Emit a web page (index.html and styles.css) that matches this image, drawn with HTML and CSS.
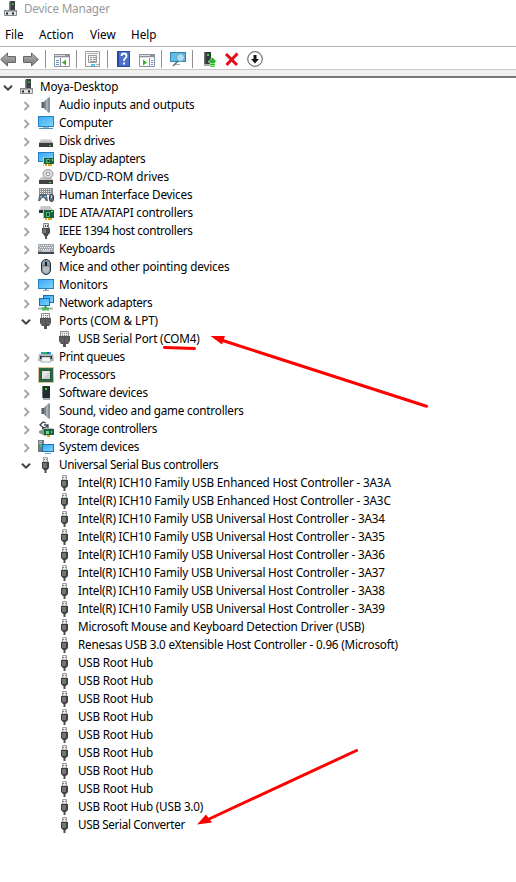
FILE: index.html
```html
<!DOCTYPE html>
<html lang="en">
<head>
<meta charset="utf-8">
<title>Device Manager</title>
<link rel="stylesheet" href="styles.css">
</head>
<body>
<svg class="defs" width="0" height="0">
  <defs>
    <linearGradient id="blue" x1="0" y1="0" x2="1" y2="1"><stop offset="0" stop-color="#3fa9f5"/><stop offset="1" stop-color="#7dd3ff"/></linearGradient>
    <linearGradient id="gray" x1="0" y1="0" x2="0" y2="1"><stop offset="0" stop-color="#b5b5b5"/><stop offset="1" stop-color="#777"/></linearGradient>
    <linearGradient id="silver" x1="0" y1="0" x2="0" y2="1"><stop offset="0" stop-color="#e4e4e4"/><stop offset="1" stop-color="#aaa"/></linearGradient>
  </defs>
  <symbol id="right" viewBox="0 0 8 10"><path d="M1.500 1l4 4-4 4" fill="none" stroke="#a6a6a6" stroke-width="1.900"/></symbol>
  <symbol id="down" viewBox="0 0 10 8"><path d="M1 1.700l4 4 4-4" fill="none" stroke="#404040" stroke-width="2"/></symbol>
  <symbol id="pc" viewBox="0 0 16 16"><path d="M6 1l1.500-1H12v9H6z" fill="#3b3f42"/><path d="M6 1h1.500v8H6z" fill="#7b8083"/><path d="M9 2.500h1.500V4H9z" fill="#35e02f"/><path d="M1.500 9.500h12v5h-12z" fill="#dfe1e2" stroke="#85898c"/><path d="M1 9h13v1.500H1z" fill="#85898c"/><path d="M3 11.500h2v2H3zM9 11.500h2v2H9z" fill="#222"/></symbol>
  <symbol id="audio" viewBox="0 0 16 16"><path d="M3 5h3v6H3z" fill="#59626a"/><path d="M3 5h1v6H3z" fill="#a3abb2"/><path d="M6 5l4-4.500v15L6 11z" fill="#a4afb8"/><path d="M6 5l2-2.200v10.400L6 11z" fill="#7b8791"/><path d="M10 .5h2v15h-2z" fill="#84909a"/></symbol>
  <symbol id="computer" viewBox="0 0 16 16"><path d="M0 1h16v11H0z" fill="#2380c4"/><path d="M1 2h14v9H1z" fill="url(#blue)"/><path d="M5 12h6v1H5z" fill="#90b8d0"/><path d="M1 13.500h14" stroke="#4a90b8"/></symbol>
  <symbol id="disk" viewBox="0 0 16 16"><path d="M3 6h10l2 4H1z" fill="url(#silver)"/><path d="M1 10h14v4H1z" fill="#3c3c3c"/><path d="M11 12h2v1h-2z" fill="#35e02f"/></symbol>
  <symbol id="display" viewBox="0 0 16 16"><path d="M0 1h16v10H0z" fill="#2380c4"/><path d="M1 2h14v8H1z" fill="url(#blue)"/><path d="M6 7h10v6H6z" fill="#17643c"/><path d="M5 6h1v9H5z" fill="#c8cdd0"/><path d="M8 8h4v4H8z" fill="#58ab73"/><path d="M9.500 9h2v2h-2z" fill="#073f22"/><path d="M7 13h2v2H7zM10 13h4v2h-4z" fill="#e5a01e"/><path d="M14 8h1v2h-1z" fill="#9fe2ac"/></symbol>
  <symbol id="dvd" viewBox="0 0 16 16"><path d="M3 8h10l2 3H1z" fill="#c5c5c5"/><ellipse cx="10" cy="5" rx="5" ry="4.500" fill="#d9dadb" stroke="#969899"/><circle cx="10" cy="5" r="1.700" fill="#fff" stroke="#969899"/><path d="M1 11h14v4H1z" fill="#414141"/><path d="M11 13h2v1h-2z" fill="#35e02f"/></symbol>
  <symbol id="hid" viewBox="0 0 16 16"><path d="M1 1h14v7H1z" fill="#8b9196"/><path d="M2 2.500h12M2 4.500h12M2 6.500h12" stroke="#e8ebed" stroke-dasharray="1 1"/><path d="M0 14l1.500-7h7l1.500 7H8l-2-3H4l-2 3z" fill="#59656e"/><path d="M2 9h2v1.500H2zM6 9h2v1.500H6z" fill="#6fc5f2"/><rect x="11.500" y="7.500" width="4" height="7" rx="2" fill="#5f7182" stroke="#26394a"/><path d="M13.500 8v3" stroke="#c6d4df"/></symbol>
  <symbol id="ide" viewBox="0 0 16 16"><path d="M3 1h9l3 4H1z" fill="#c8c8c8"/><path d="M1 5h6v3H1z" fill="#333"/><path d="M6 5h10v8H6z" fill="#17643c"/><path d="M5 4h1v10H5z" fill="#b9bec0"/><path d="M8 7h4v5H8z" fill="#5bb478"/><path d="M9 8h2v3H9z" fill="#0b4d28"/><path d="M7 13h2v2H7zM10 13h4v2h-4z" fill="#e5a01e"/><path d="M13 6h2v1h-2z" fill="#ade9bb"/></symbol>
  <symbol id="ieee" viewBox="0 0 16 16"><path d="M5.500.5h5v5h-5z" fill="#e0e0e0" stroke="#858585"/><path d="M7 2h1v2H7zM9 2h1v2H9z" fill="#555"/><path d="M4 5h8v5l-2 2v1H6v-1l-2-2z" fill="#4c4c4c"/><path d="M5 6h3v4H5z" fill="#777"/><path d="M7 13h2v3H7z" fill="#555"/></symbol>
  <symbol id="keyboard" viewBox="0 0 16 16"><path d="M0 3h16v10H0z" fill="#a0a7ac"/><path d="M0 11h16v2H0z" fill="#3e464c"/><path d="M1 4.500h14M2 6.500h13M1 8.500h14" stroke="#f1f3f4" stroke-dasharray="1 1"/><path d="M4 10h8" stroke="#e5e8ea"/></symbol>
  <symbol id="mouse" viewBox="0 0 16 16"><rect x="3.500" y=".5" width="9" height="15" rx="4.500" fill="#8f9ba6" stroke="#24303a"/><path d="M5 7h6v5q-3 4-6 0z" fill="#b5bec5"/><path d="M4 7h8M8 1v6" stroke="#5a6873" stroke-width=".7"/><path d="M7 3h2v4H7z" fill="#17212a"/></symbol>
  <symbol id="monitor" viewBox="0 0 16 16"><path d="M0 2h16v10H0z" fill="#2380c4"/><path d="M1 3h14v8H1z" fill="url(#blue)"/><path d="M5 13h6v1H5z" fill="#9ba9b1"/><path d="M7 12h2v1H7z" fill="#7896a8"/></symbol>
  <symbol id="network" viewBox="0 0 16 16"><path d="M5 0h11v8H5z" fill="#1770b5"/><path d="M6 1h9v6H6z" fill="url(#blue)"/><path d="M1 3h11v8H1z" fill="#1770b5"/><path d="M2 4h9v6H2z" fill="url(#blue)"/><path d="M0 13.500h15" stroke="#aab1b5" stroke-width="2"/><path d="M4 12.500h7v3H4z" fill="#4fb85a"/><path d="M6.500 11h2v2h-2z" fill="#319c3c"/></symbol>
  <symbol id="port" viewBox="0 0 16 16"><path d="M3.500.5h8v5h-8z" fill="#eee" stroke="#888"/><path d="M5 2.500h6M5 4.500h6" stroke="#777" stroke-dasharray="1 1"/><path d="M2 5h11v5l-2 3H4l-2-3z" fill="#505050"/><path d="M4 6v6M6 6v6M9 6v6M11 6v6" stroke="#777" stroke-width=".8"/><path d="M6 13h3v3H6z" fill="#555"/></symbol>
  <symbol id="printer" viewBox="0 0 16 16"><path d="M3 3h10v3H3z" fill="#1aa7dc"/><path d="M6 3h3v3H6z" fill="#28b85e"/><path d="M9 3h2v3H9z" fill="#155db5"/><path d="M1 5h14l1 7H0l1-7z" fill="#aeb4b8"/><path d="M2 7h12v3H2z" fill="#30373c"/><path d="M4 8h8l1 5H3z" fill="#f5f6f7" stroke="#89949b" stroke-width=".7"/></symbol>
  <symbol id="cpu" viewBox="0 0 16 16"><path d="M.5.5h15v15H.5z" fill="none" stroke="#b68b2c" stroke-dasharray="1 1"/><path d="M1 1h14v14H1z" fill="#2d6846"/><path d="M3 3h10v10H3z" fill="#245a3c"/><path d="M4 4h8v8H4z" fill="#e6e6e6"/><path d="M4 12l8-8v8z" fill="#cfd1d0"/></symbol>
  <symbol id="software" viewBox="0 0 16 16"><path d="M4 1h8v12H4z" fill="#252b2f"/><path d="M4 1h1v12H4z" fill="#6e7579"/><path d="M7 3h2v2H7z" fill="#35e02f"/><path d="M5 13h7v2H5z" fill="#a6abae"/></symbol>
  <symbol id="storage" viewBox="0 0 16 16"><path d="M8 2L5 1 2 4l4 3 4-2M6 4h4v3L7 9 4 7" fill="none" stroke="#3f4548" stroke-width="1.300"/><path d="M1 10l5-2h9v6H5l-4-2z" fill="#8b9690"/><path d="M6 8h10v6H6z" fill="#17643c"/><path d="M6 7h9v1H6z" fill="#b8bfc2"/><path d="M8 10h3v3H8zM13 10h1v2h-1z" fill="#7cd08f"/><path d="M6 14h2v1H6zM9 14h3v2H9z" fill="#e5a01e"/></symbol>
  <symbol id="system" viewBox="0 0 16 16"><path d="M0 1h6v12H0z" fill="#717a80"/><path d="M1 2h3v1H1zM1 4h3v1H1z" fill="#c6cdd1"/><path d="M2 6h2v2H2z" fill="#35d835"/><path d="M4 5h12v8H4z" fill="#1770b5"/><path d="M5 6h10v6H5z" fill="url(#blue)"/><path d="M7 14h6v1H7z" fill="#5faad0"/></symbol>
  <symbol id="usb" viewBox="0 0 16 16"><path d="M5.500.5h4v4.500h-4z" fill="#eee" stroke="#a0a0a0"/><path d="M6 2h1v1H6zM8 2h1v1H8z" fill="#777"/><path d="M4 5h7v6l-2 2H6l-2-2z" fill="#3f3f3f"/><path d="M5 6h4v5H5z" fill="#747474"/><path d="M6.500 12h2v4h-2z" fill="#4a4a4a"/></symbol>
  <symbol id="back" viewBox="0 0 16 16"><path d="M.7 8.500L7.500 2v3.500h8v6h-8V15z" fill="url(#gray)" stroke="#666"/></symbol>
  <symbol id="forward" viewBox="0 0 16 16"><path d="M15.300 8.500L8.500 2v3.500h-8v6h8V15z" fill="url(#gray)" stroke="#666"/></symbol>
  <symbol id="panel-left" viewBox="0 0 16 16"><path d="M.5 3.500h15v12H.5z" fill="#fff" stroke="#8a929b"/><path d="M0 3h16v4H0z" fill="#8a929b"/><path d="M1 4.500h10M1 6.500h14" stroke="#d9dee3"/><path d="M6.500 7v8" stroke="#8a929b"/><path d="M2 9.500h3M2 11.500h3M2 13.500h3" stroke="#5b8fca"/><path d="M12 8.500v6l-4-3z" fill="#3cae22"/></symbol>
  <symbol id="panel-right" viewBox="0 0 16 16"><path d="M.5 3.500h15v12H.5z" fill="#fff" stroke="#8a929b"/><path d="M0 3h16v4H0z" fill="#8a929b"/><path d="M1 4.500h10M1 6.500h14" stroke="#d9dee3"/><path d="M10.500 7v8" stroke="#8a929b"/><path d="M12 9.500h2M12 11.500h2M12 13.500h2" stroke="#5b8fca"/><path d="M4 8.500v6l4-3z" fill="#3cae22"/></symbol>
  <symbol id="properties" viewBox="0 0 16 16"><path d="M.5.500h14v15H.5z" fill="#fafafa" stroke="#9a9a9a"/><path d="M2 2.500h11" stroke="#aaa"/><path d="M3.500 4.500h8v7h-8z" fill="#eee" stroke="#9a9a9a"/><path d="M5 6.500h2M8 6.500h3M5 8.500h2M8 8.500h3M5 10.500h6" stroke="#999"/><path d="M6 13h4v2H6z" fill="#55c5e8"/><path d="M11 13h3v1h-3z" fill="#aaa"/></symbol>
  <symbol id="help" viewBox="0 0 16 16"><path d="M1 0h13v16H1z" fill="#2849a0"/><path d="M3 1h10v14H3z" fill="#4b70cb"/><path d="M5.500 5q0-2.500 2.500-2.500T10.500 5q0 1.500-1.300 2.300T8 10" fill="none" stroke="#fff" stroke-width="1.800"/><path d="M7 11.500h2v2H7z" fill="#fff"/></symbol>
  <symbol id="scan" viewBox="0 0 16 16"><path d="M0 1h16v10H0z" fill="#3184b0"/><path d="M1 2h14v8H1z" fill="#5dbce9"/><path d="M4 13.500h6" stroke="#98adb8"/><path d="M8 10l-5 5" stroke="#476d83" stroke-width="1.500"/><circle cx="10.500" cy="6.500" r="4" fill="#acdff6" stroke="#6a9cb7"/></symbol>
  <symbol id="update" viewBox="0 0 16 16"><path d="M3 1h7v12H3z" fill="#33383b"/><path d="M3 1h1.500v12H3z" fill="#686f73"/><path d="M6 3h2v2H6z" fill="#35e02f"/><path d="M3 13h8v2H3z" fill="#aaa"/><path d="M11.500 6l4.500 5h-2v5h-5v-5H7z" fill="#25b52e" stroke="#fff" stroke-width=".5"/><path d="M9 12.500h5M9 14.500h5" stroke="#a9eea9" stroke-width=".8"/></symbol>
  <symbol id="remove" viewBox="0 0 16 16"><path d="M2 3l11 11M13.500 2.500L2.500 14" stroke="#e20c18" stroke-width="3"/></symbol>
  <symbol id="disable" viewBox="0 0 16 16"><circle cx="8" cy="8" r="7.300" fill="#fff" stroke="#777" stroke-width="1.200"/><path d="M6.500 4h3v4H12l-4 4.500L4 8h2.500z" fill="#151515"/></symbol>
</svg>

<main class="window">
  <header class="titlebar"><svg class="icon"><use href="#pc"/></svg><span>Device Manager</span></header>
  <nav class="menu"><span class="file">File</span><span class="action">Action</span><span class="view">View</span><span>Help</span></nav>
  <div class="toolbar">
    <svg class="icon"><use href="#back"/></svg><svg class="icon"><use href="#forward"/></svg><i></i>
    <svg class="icon"><use href="#panel-left"/></svg><i></i>
    <svg class="icon"><use href="#properties"/></svg><i></i>
    <svg class="icon"><use href="#help"/></svg><svg class="icon"><use href="#panel-right"/></svg><i></i>
    <svg class="icon"><use href="#scan"/></svg><i></i>
    <svg class="icon"><use href="#update"/></svg><svg class="icon"><use href="#remove"/></svg><svg class="icon"><use href="#disable"/></svg>
  </div>
  <div class="strip"></div>
  <ul class="tree">
    <li class="root loose"><svg class="down"><use href="#down"/></svg><svg class="icon"><use href="#pc"/></svg><span>Moya-Desktop</span></li>
    <li class="host"><svg class="right"><use href="#right"/></svg><svg class="icon"><use href="#audio"/></svg><span>Audio inputs and outputs</span></li>
    <li><svg class="right"><use href="#right"/></svg><svg class="icon"><use href="#computer"/></svg><span>Computer</span></li>
    <li class="tight"><svg class="right"><use href="#right"/></svg><svg class="icon"><use href="#disk"/></svg><span>Disk drives</span></li>
    <li class="tight"><svg class="right"><use href="#right"/></svg><svg class="icon"><use href="#display"/></svg><span>Display adapters</span></li>
    <li class="loose"><svg class="right"><use href="#right"/></svg><svg class="icon"><use href="#dvd"/></svg><span>DVD/CD-ROM drives</span></li>
    <li><svg class="right"><use href="#right"/></svg><svg class="icon"><use href="#hid"/></svg><span>Human Interface Devices</span></li>
    <li><svg class="right"><use href="#right"/></svg><svg class="icon"><use href="#ide"/></svg><span>IDE ATA/ATAPI controllers</span></li>
    <li class="tight"><svg class="right"><use href="#right"/></svg><svg class="icon"><use href="#ieee"/></svg><span>IEEE 1394 host controllers</span></li>
    <li><svg class="right"><use href="#right"/></svg><svg class="icon"><use href="#keyboard"/></svg><span>Keyboards</span></li>
    <li class="host"><svg class="right"><use href="#right"/></svg><svg class="icon"><use href="#mouse"/></svg><span>Mice and other pointing devices</span></li>
    <li class="wide"><svg class="right"><use href="#right"/></svg><svg class="icon"><use href="#monitor"/></svg><span>Monitors</span></li>
    <li class="tight"><svg class="right"><use href="#right"/></svg><svg class="icon"><use href="#network"/></svg><span>Network adapters</span></li>
    <li class="loose"><svg class="down"><use href="#down"/></svg><svg class="icon"><use href="#port"/></svg><span>Ports (COM &amp; LPT)</span></li>
    <li class="child"><svg class="icon"><use href="#port"/></svg><span>USB Serial Port (COM4)</span></li>
    <li class="tight"><svg class="right"><use href="#right"/></svg><svg class="icon"><use href="#printer"/></svg><span>Print queues</span></li>
    <li class="tight"><svg class="right"><use href="#right"/></svg><svg class="icon"><use href="#cpu"/></svg><span>Processors</span></li>
    <li><svg class="right"><use href="#right"/></svg><svg class="icon"><use href="#software"/></svg><span>Software devices</span></li>
    <li><svg class="right"><use href="#right"/></svg><svg class="icon"><use href="#audio"/></svg><span>Sound, video and game controllers</span></li>
    <li class="tight"><svg class="right"><use href="#right"/></svg><svg class="icon"><use href="#storage"/></svg><span>Storage controllers</span></li>
    <li><svg class="right"><use href="#right"/></svg><svg class="icon"><use href="#system"/></svg><span>System devices</span></li>
    <li class="tight"><svg class="down"><use href="#down"/></svg><svg class="icon"><use href="#usb"/></svg><span>Universal Serial Bus controllers</span></li>
    <li class="child host"><svg class="icon"><use href="#usb"/></svg><span>Intel(R) ICH10 Family USB Enhanced Host Controller - 3A3A</span></li>
    <li class="child host"><svg class="icon"><use href="#usb"/></svg><span>Intel(R) ICH10 Family USB Enhanced Host Controller - 3A3C</span></li>
    <li class="child"><svg class="icon"><use href="#usb"/></svg><span>Intel(R) ICH10 Family USB Universal Host Controller - 3A34</span></li>
    <li class="child"><svg class="icon"><use href="#usb"/></svg><span>Intel(R) ICH10 Family USB Universal Host Controller - 3A35</span></li>
    <li class="child"><svg class="icon"><use href="#usb"/></svg><span>Intel(R) ICH10 Family USB Universal Host Controller - 3A36</span></li>
    <li class="child"><svg class="icon"><use href="#usb"/></svg><span>Intel(R) ICH10 Family USB Universal Host Controller - 3A37</span></li>
    <li class="child"><svg class="icon"><use href="#usb"/></svg><span>Intel(R) ICH10 Family USB Universal Host Controller - 3A38</span></li>
    <li class="child"><svg class="icon"><use href="#usb"/></svg><span>Intel(R) ICH10 Family USB Universal Host Controller - 3A39</span></li>
    <li class="child"><svg class="icon"><use href="#usb"/></svg><span>Microsoft Mouse and Keyboard Detection Driver (USB)</span></li>
    <li class="child"><svg class="icon"><use href="#usb"/></svg><span>Renesas USB 3.0 eXtensible Host Controller - 0.96 (Microsoft)</span></li>
    <li class="child"><svg class="icon"><use href="#usb"/></svg><span>USB Root Hub</span></li>
    <li class="child"><svg class="icon"><use href="#usb"/></svg><span>USB Root Hub</span></li>
    <li class="child"><svg class="icon"><use href="#usb"/></svg><span>USB Root Hub</span></li>
    <li class="child"><svg class="icon"><use href="#usb"/></svg><span>USB Root Hub</span></li>
    <li class="child"><svg class="icon"><use href="#usb"/></svg><span>USB Root Hub</span></li>
    <li class="child"><svg class="icon"><use href="#usb"/></svg><span>USB Root Hub</span></li>
    <li class="child"><svg class="icon"><use href="#usb"/></svg><span>USB Root Hub</span></li>
    <li class="child"><svg class="icon"><use href="#usb"/></svg><span>USB Root Hub</span></li>
    <li class="child"><svg class="icon"><use href="#usb"/></svg><span>USB Root Hub (USB 3.0)</span></li>
    <li class="child tight"><svg class="icon"><use href="#usb"/></svg><span>USB Serial Converter</span></li>
  </ul>
  <svg class="annotations" viewBox="0 0 516 882">
    <path d="M164.500 347.500l30 1M222 340.300l204.500 66M208 819.500l148.500-69" />
    <path class="head" d="M210.500 336l14.500 0-3 8.500zM197 824.500l9-10 6 8z"/>
  </svg>
</main>
</body>
</html>
```

FILE: styles.css
```css
* { box-sizing: border-box; }
body { margin: 0; background: #fff; color: #000; font: 11.7px/16px "Noto Sans", "Open Sans", sans-serif; letter-spacing: -0.2px; }
.defs { position: absolute; }
.window { position: relative; width: 516px; height: 882px; overflow: hidden; }
.icon { display: block; flex: none; width: 16px; height: 16px; }
.titlebar { display: flex; height: 18px; padding-left: 3px; gap: 5px; color: #999; letter-spacing: -0.2px; }
.titlebar .icon { margin-top: 1px; }
.menu { display: flex; height: 28px; padding: 8px 0 0 5px; letter-spacing: 0; }
.file { width: 34px; }
.action { width: 51px; }
.view { width: 41px; }
.toolbar { display: flex; gap: 7px; height: 23px; padding-top: 4px; border-top: 1px solid #b5b5b5; }
.toolbar i { flex: none; width: 1px; height: 18px; margin: -1px 1px 0 -1px; background: #909090; }
.strip { height: 9px; background: #f0f0f0; border-top: 1px solid #c8c8c8; border-bottom: 2px solid #777; }
.tree { margin: 0; padding: 0; list-style: none; }
.tree li { display: flex; align-items: center; height: 18px; padding-left: 21px; white-space: nowrap; }
.tree .root { padding-left: 3px; }
.tree .child { padding-left: 57px; }
.tree span { margin: 0 0 2px 5px; }
.tree .host { letter-spacing: -0.16px; }
.tree .tight { letter-spacing: -0.34px; }
.tree .loose { letter-spacing: -0.06px; }
.tree .wide { letter-spacing: -0.1px; }
.right { flex: none; width: 8px; height: 10px; margin: 2px 7px 0 2px; }
.down { flex: none; width: 10px; height: 8px; margin: 1px 7px 0 0; }
.root .down { margin-right: 6px; }
.annotations { position: absolute; inset: 0; width: 516px; height: 882px; pointer-events: none; }
.annotations path { fill: none; stroke: #f00; stroke-width: 3; stroke-linecap: round; }
.annotations .head { fill: #f00; stroke: none; }
```
